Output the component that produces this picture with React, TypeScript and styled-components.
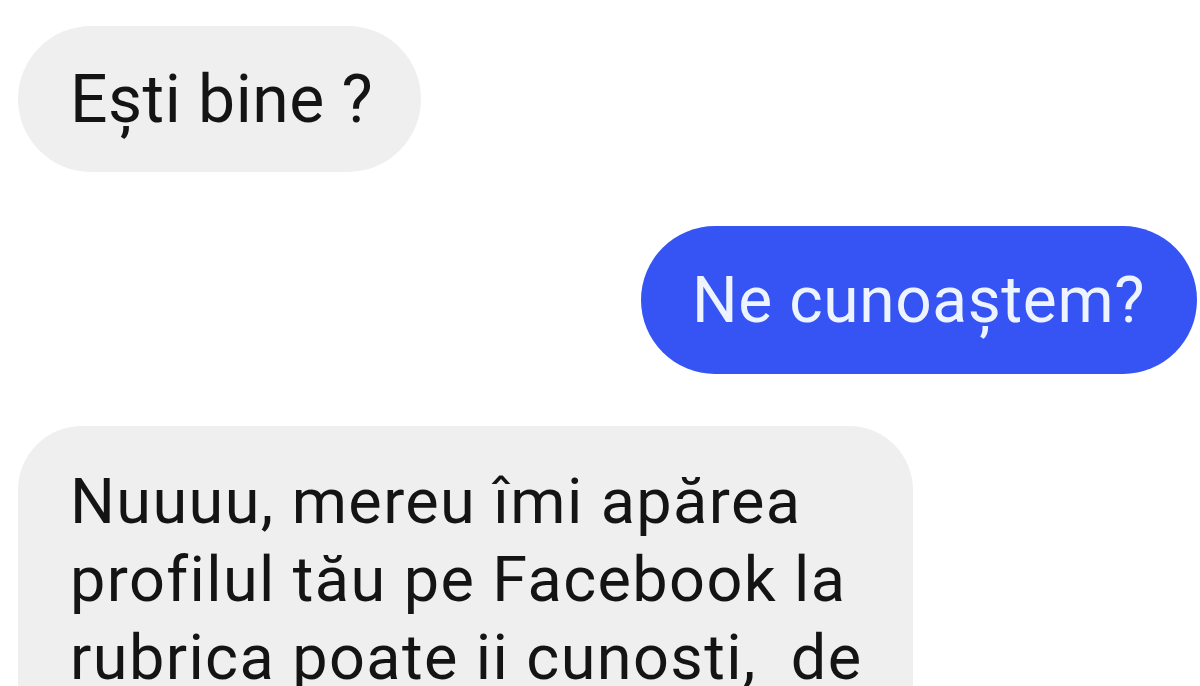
import React from "react";
import styled, { createGlobalStyle } from "styled-components";

const Global = createGlobalStyle`
  html, body { margin: 0; padding: 0; background: #ffffff; }
  body { width: 1200px; height: 686px; overflow: hidden; }
  #root { width: 1200px; height: 686px; overflow: hidden; }
`;

const Thread = styled.div`
  display: flex;
  flex-direction: column;
  padding: 26px 3px 0 18px;
  font-family: Roboto, "Noto Sans", Arial, sans-serif;
`;

const Bubble = styled.div<{ $mine?: boolean }>`
  align-self: ${(p) => (p.$mine ? "flex-end" : "flex-start")};
  background: ${(p) => (p.$mine ? "#3654f4" : "#efefef")};
  color: ${(p) => (p.$mine ? "#eef4ff" : "#141414")};
  border-radius: 74px;
  white-space: pre;
`;

const ShortBubble = styled(Bubble)`
  font-size: 66px;
  line-height: 78px;
  height: 146px;
  box-sizing: border-box;
  padding: 35px 48px 0 52px;
  letter-spacing: 0.5px;
`;

const ReplyBubble = styled(Bubble)`
  margin-top: 54px;
  font-size: 64px;
  line-height: 78px;
  height: 148px;
  box-sizing: border-box;
  padding: 36px 52px 0 51px;
  letter-spacing: 0.6px;
`;

const LongBubble = styled(Bubble)`
  margin-top: 52px;
  width: 895px;
  box-sizing: border-box;
  border-radius: 64px;
  padding: 37px 40px 60px 52px;
  font-size: 63px;
  line-height: 78px;
  letter-spacing: 1.4px;
`;

export default function App() {
  return (
    <>
      <Global />
      <Thread>
        <ShortBubble>Ești bine ?</ShortBubble>
        <ReplyBubble $mine>Ne cunoaștem?</ReplyBubble>
        <LongBubble>
          {"Nuuuu, mereu îmi apărea"}
          <br />
          {"profilul tău pe Facebook la"}
          <br />
          {"rubrica poate ii cunosti,  de"}
        </LongBubble>
      </Thread>
    </>
  );
}
